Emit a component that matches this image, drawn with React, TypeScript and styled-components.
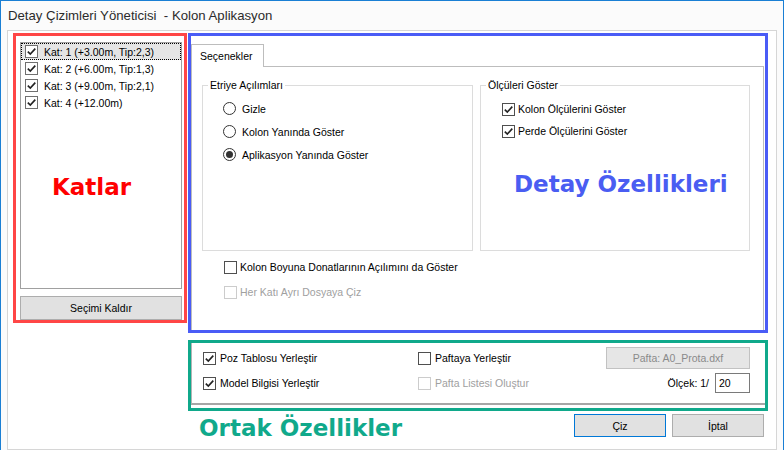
import styled, { createGlobalStyle } from "styled-components";

const GlobalStyle = createGlobalStyle`
  html, body {
    margin: 0;
    padding: 0;
    background: #ffffff;
  }
  body {
    font-family: "Liberation Sans", Arial, sans-serif;
    font-size: 10.5px;
    color: #000000;
  }
`;

const Window = styled.div`
  width: 784px;
  height: 450px;
  box-sizing: border-box;
  border: 1px solid #1a7fd4;
  border-bottom: none;
  background: #fbfbfb;
  display: flex;
  flex-direction: column;
  overflow: hidden;
`;

const TitleBar = styled.div`
  height: 29px;
  line-height: 29px;
  padding-left: 7px;
  font-size: 13.2px;
  color: #2b2b2b;
  flex-shrink: 0;
`;

const Client = styled.div`
  margin-left: 6px;
  width: 770px;
  height: 420px;
  box-sizing: border-box;
  border: 1px solid #d6d6d6;
  background: #ffffff;
  display: flex;
  align-items: flex-start;
  gap: 1px;
  padding: 2px 0 0 5px;
`;

const Note = styled.div<{ $color: string }>`
  font-family: "DejaVu Sans", Verdana, sans-serif;
  font-weight: bold;
  font-size: 23px;
  line-height: 23px;
  color: ${({ $color }) => $color};
  white-space: nowrap;
`;

const FloatingNote = styled(Note)<{ $left: number; $top: number }>`
  position: absolute;
  left: ${({ $left }) => $left}px;
  top: ${({ $top }) => $top}px;
  pointer-events: none;
`;

/* ---------- left: floors ---------- */

const FloorsFrame = styled.div`
  position: relative;
  width: 174px;
  height: 290px;
  box-sizing: border-box;
  border: 3px solid #ff4646;
  padding: 6px 2px 0 4px;
  display: flex;
  flex-direction: column;
  gap: 7px;
`;

const FloorList = styled.div`
  height: 247px;
  box-sizing: border-box;
  border: 1px solid #a0a0a0;
  background: #ffffff;
`;

const FloorRow = styled.div<{ $selected?: boolean }>`
  height: 17px;
  display: flex;
  align-items: center;
  gap: 6px;
  padding-left: 4px;
  background: ${({ $selected }) => ($selected ? "#e5e5e5" : "transparent")};
  outline: ${({ $selected }) => ($selected ? "1px dotted #000" : "none")};
  outline-offset: -1px;
  white-space: nowrap;
`;

const Button = styled.button<{ $width?: number; $height?: number; $default?: boolean }>`
  width: ${({ $width }) => ($width ? `${$width}px` : "100%")};
  height: ${({ $height }) => $height ?? 23}px;
  box-sizing: border-box;
  border: 1px solid ${({ $default }) => ($default ? "#0078d7" : "#adadad")};
  background: #e1e1e1;
  font-family: inherit;
  font-size: 10.5px;
  color: #000;
  padding: 0;
  flex-shrink: 0;

  &:disabled {
    background: #e6e6e6;
    border-color: #c2c2c2;
    color: #8a8a8a;
  }
`;

/* ---------- check boxes and radios ---------- */

const Box = styled.span<{ $disabled?: boolean; $soft?: boolean }>`
  width: 13px;
  height: 13px;
  box-sizing: border-box;
  border: 1px solid
    ${({ $disabled, $soft }) => ($disabled ? "#cccccc" : $soft ? "#707070" : "#4f4f4f")};
  background: #ffffff;
  display: inline-flex;
  flex-shrink: 0;
`;

const CheckRow = styled.label<{ $gap?: number; $disabled?: boolean; $height?: number }>`
  display: flex;
  align-items: center;
  gap: ${({ $gap }) => $gap ?? 4}px;
  height: ${({ $height }) => $height ?? 22}px;
  color: ${({ $disabled }) => ($disabled ? "#a0a0a0" : "#000")};
  white-space: nowrap;
`;

const CheckMark = () => (
  <svg width="11" height="11" viewBox="0 0 11 11">
    <polyline
      points="1.8,5.6 4.3,8.1 9.3,2.6"
      fill="none"
      stroke="#222"
      strokeWidth="1.6"
    />
  </svg>
);

const CheckBox = ({ checked, disabled, soft }: { checked?: boolean; disabled?: boolean; soft?: boolean }) => (
  <Box $disabled={disabled} $soft={soft}>{checked ? <CheckMark /> : null}</Box>
);

const Check = ({
  label,
  checked,
  disabled,
  gap,
  height,
}: {
  label: string;
  checked?: boolean;
  disabled?: boolean;
  gap?: number;
  height?: number;
}) => (
  <CheckRow $gap={gap} $disabled={disabled} $height={height}>
    <CheckBox checked={checked} disabled={disabled} />
    {label}
  </CheckRow>
);

const RadioCircle = styled.span<{ $on?: boolean }>`
  width: 13px;
  height: 13px;
  box-sizing: border-box;
  border-radius: 50%;
  border: 1px solid #333;
  background: #fff;
  display: inline-flex;
  align-items: center;
  justify-content: center;
  flex-shrink: 0;

  &::after {
    content: "";
    width: 7px;
    height: 7px;
    border-radius: 50%;
    background: ${({ $on }) => ($on ? "#333" : "transparent")};
  }
`;

const RadioRow = styled.label`
  display: flex;
  align-items: center;
  gap: 6px;
  height: 23px;
  white-space: nowrap;
`;

/* ---------- right: details ---------- */

const RightColumn = styled.div`
  width: 580px;
  display: flex;
  flex-direction: column;
`;

const DetailsFrame = styled.div`
  position: relative;
  height: 300px;
  box-sizing: border-box;
  border: 3px solid #4a5cf6;
  padding: 8px 1px 0 0;
  display: flex;
  flex-direction: column;
`;

const TabStrip = styled.div`
  display: flex;
  margin-bottom: -1px;
`;

const Tab = styled.div`
  position: relative;
  z-index: 1;
  width: 73px;
  height: 23px;
  box-sizing: border-box;
  border: 1px solid #bdbdbd;
  border-bottom: none;
  background: #fff;
  padding-left: 8px;
  line-height: 22px;
`;

const TabPanel = styled.div`
  flex: 1;
  border: 1px solid #bdbdbd;
  border-bottom: none;
  padding: 12px 0 0 10px;
`;

const GroupRow = styled.div`
  display: flex;
  gap: 7px;
`;

const Group = styled.fieldset<{ $width: number }>`
  margin: 0;
  width: ${({ $width }) => $width}px;
  height: 172px;
  box-sizing: border-box;
  border: 1px solid #dcdcdc;
  padding: 0 0 0 5px;
  min-width: 0;
`;

const Legend = styled.legend`
  padding: 0 2px;
  line-height: 13px;
  font-size: 10.5px;
`;

const GroupBody = styled.div<{ $top: number; $left: number }>`
  padding-top: ${({ $top }) => $top}px;
  padding-left: ${({ $left }) => $left}px;
`;

const ExtraOptions = styled.div`
  margin: 5px 0 0 22px;
  display: flex;
  flex-direction: column;
  gap: 3px;
`;

/* ---------- bottom: common ---------- */

const CommonFrame = styled.div`
  margin-top: 7px;
  height: 71px;
  box-sizing: border-box;
  border: 3px solid #10a98b;
  padding-bottom: 3px;
  display: flex;
`;

const CommonPanel = styled.div`
  flex: 1;
  border-left: 1px solid #b4b4b4;
  border-bottom: 2px solid #a6a6a6;
  padding: 4px 15px 0 11px;
  display: grid;
  grid-template-columns: 215px 1fr auto;
  grid-template-rows: 22px 22px;
  row-gap: 3px;
  align-items: center;
`;

const Scale = styled.div`
  justify-self: end;
  display: flex;
  align-items: center;
  gap: 6px;
`;

const ScaleInput = styled.div`
  width: 35px;
  height: 20px;
  box-sizing: border-box;
  border: 1px solid #7a7a7a;
  padding-left: 3px;
  line-height: 18px;
`;

const Footer = styled.div`
  margin-top: 3px;
  display: flex;
  align-items: flex-start;
  gap: 6px;
  padding-right: 4px;
`;

const FooterNote = styled(Note)`
  margin: 3px auto 0 11px;
`;

const floors = [
  "Kat: 1 (+3.00m, Tip:2,3)",
  "Kat: 2 (+6.00m, Tip:1,3)",
  "Kat: 3 (+9.00m, Tip:2,1)",
  "Kat: 4 (+12.00m)",
];

const stirrupModes = [
  { label: "Gizle", on: false },
  { label: "Kolon Yanında Göster", on: false },
  { label: "Aplikasyon Yanında Göster", on: true },
];

export default function App() {
  return (
    <>
      <GlobalStyle />
      <Window>
        <TitleBar>Detay Çizimleri Yöneticisi&nbsp; - Kolon Aplikasyon</TitleBar>
        <Client>
          <FloorsFrame>
            <FloorList>
              {floors.map((f, i) => (
                <FloorRow key={f} $selected={i === 0}>
                  <CheckBox checked soft />
                  {f}
                </FloorRow>
              ))}
            </FloorList>
            <Button $height={24}>Seçimi Kaldır</Button>
            <FloatingNote $color="#ff0000" $left={36} $top={140}>
              Katlar
            </FloatingNote>
          </FloorsFrame>

          <RightColumn>
            <DetailsFrame>
              <TabStrip>
                <Tab>Seçenekler</Tab>
              </TabStrip>
              <TabPanel>
                <GroupRow>
                  <Group $width={271}>
                    <Legend>Etriye Açılımları</Legend>
                    <GroupBody $top={5} $left={15}>
                      {stirrupModes.map((m) => (
                        <RadioRow key={m.label}>
                          <RadioCircle $on={m.on} />
                          {m.label}
                        </RadioRow>
                      ))}
                    </GroupBody>
                  </Group>
                  <Group $width={270}>
                    <Legend>Ölçüleri Göster</Legend>
                    <GroupBody $top={6} $left={16}>
                      <Check label="Kolon Ölçülerini Göster" checked gap={3} />
                      <Check label="Perde Ölçülerini Göster" checked gap={3} />
                    </GroupBody>
                  </Group>
                </GroupRow>
                <ExtraOptions>
                  <Check label="Kolon Boyuna Donatlarının Açılımını da Göster" gap={3} />
                  <Check label="Her Katı Ayrı Dosyaya Çiz" disabled gap={3} />
                </ExtraOptions>
              </TabPanel>
              <FloatingNote $color="#4a5df2" $left={323} $top={137}>
                Detay Özellikleri
              </FloatingNote>
            </DetailsFrame>

            <CommonFrame>
              <CommonPanel>
                <Check label="Poz Tablosu Yerleştir" checked />
                <Check label="Paftaya Yerleştir" />
                <Button $width={144} $height={22} disabled>
                  Pafta: A0_Prota.dxf
                </Button>
                <Check label="Model Bilgisi Yerleştir" checked />
                <Check label="Pafta Listesi Oluştur" disabled />
                <Scale>
                  Ölçek: 1/
                  <ScaleInput>20</ScaleInput>
                </Scale>
              </CommonPanel>
            </CommonFrame>

            <Footer>
              <FooterNote $color="#10a98b">Ortak Özellikler</FooterNote>
              <Button $width={92} $default>
                Çiz
              </Button>
              <Button $width={92}>İptal</Button>
            </Footer>
          </RightColumn>
        </Client>
      </Window>
    </>
  );
}
